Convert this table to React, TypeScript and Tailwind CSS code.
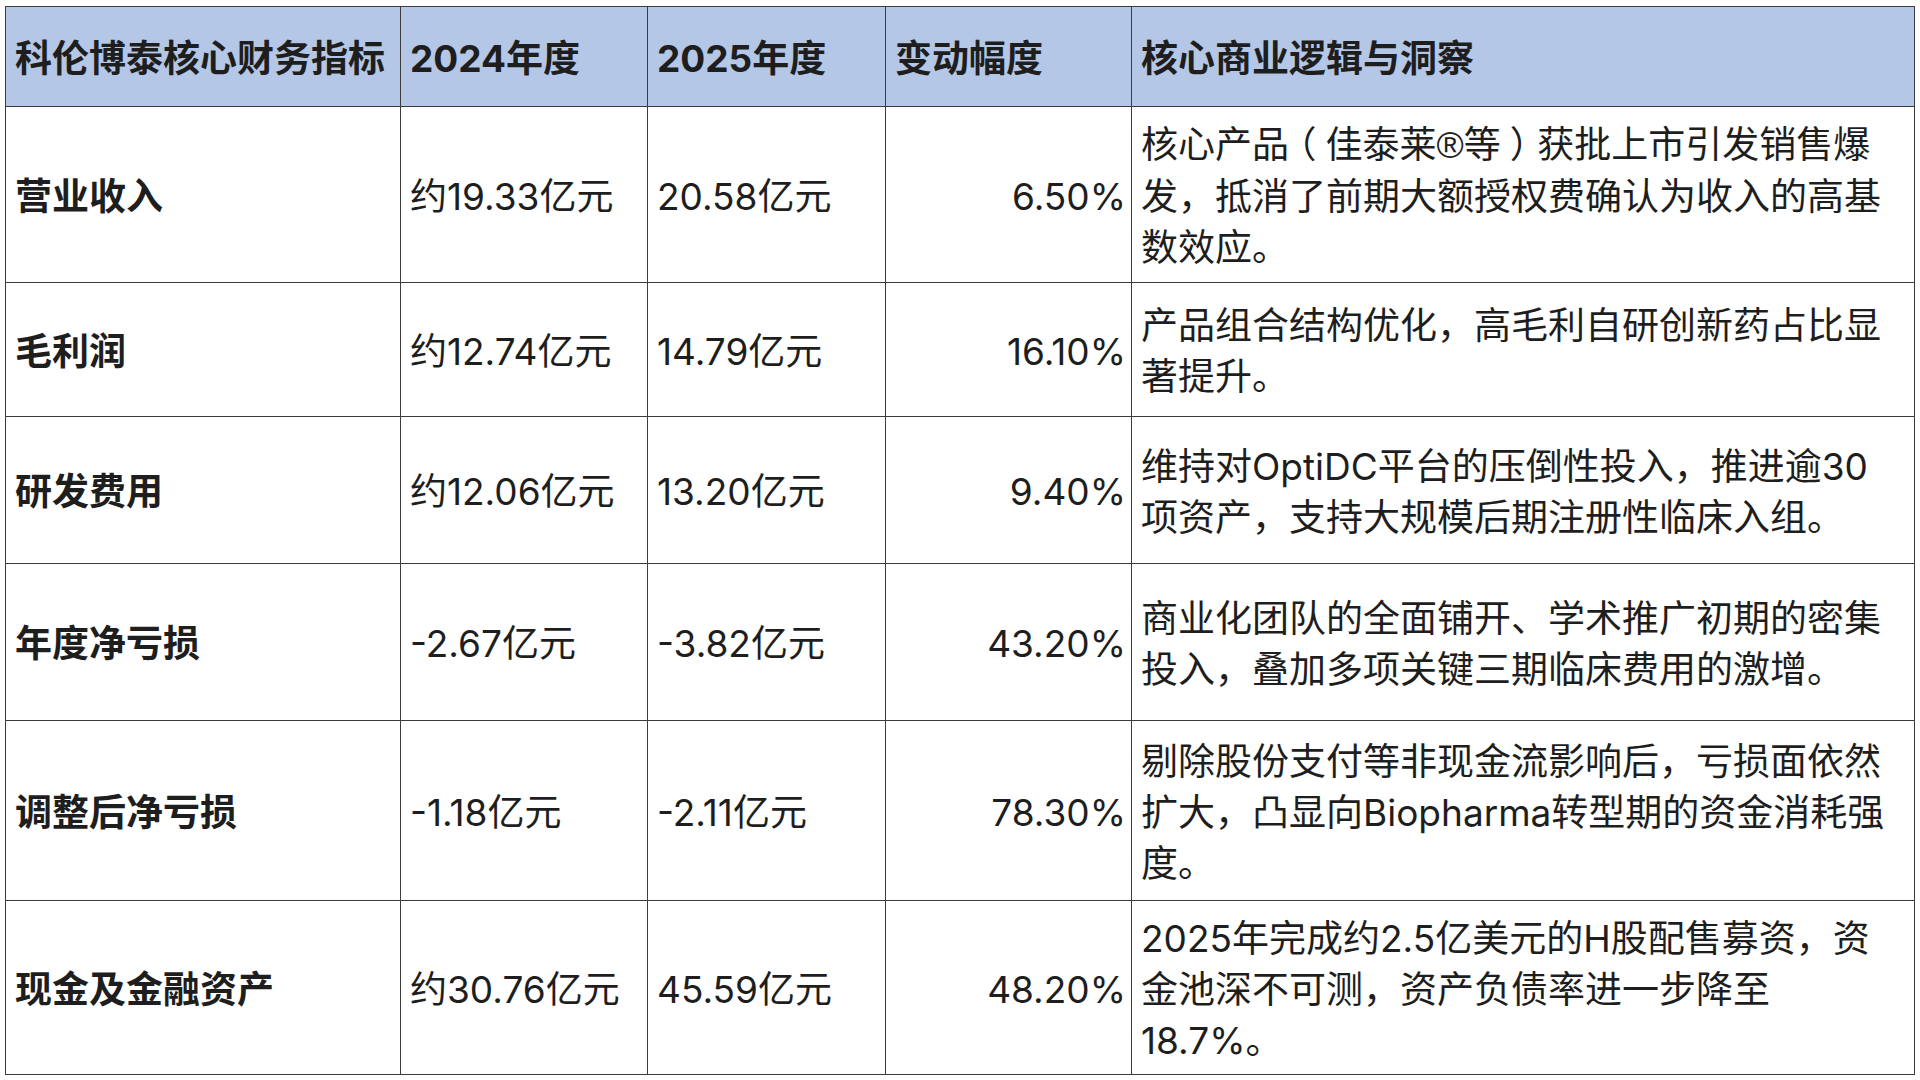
import React from "react";

const R = () => <span className="font-['Liberation_Sans']">®</span>;
const Paren = ({ c }: { c: string }) => (
  <span className="px-[9px] [font-feature-settings:'halt']">{c}</span>
);

const rows: { name: string; a: string; b: string; c: string; lines: React.ReactNode[]; h: number }[] = [
  {
    name: "营业收入",
    a: "约19.33亿元",
    b: "20.58亿元",
    c: "6.50%",
    lines: [
      <>
        核心产品<Paren c="（" />佳泰莱<R />等<Paren c="）" />获批上市引发销售爆
      </>,
      "发，抵消了前期大额授权费确认为收入的高基",
      "数效应。",
    ],
    h: 176,
  },
  {
    name: "毛利润",
    a: "约12.74亿元",
    b: "14.79亿元",
    c: "16.10%",
    lines: ["产品组合结构优化，高毛利自研创新药占比显", "著提升。"],
    h: 134,
  },
  {
    name: "研发费用",
    a: "约12.06亿元",
    b: "13.20亿元",
    c: "9.40%",
    lines: ["维持对OptiDC平台的压倒性投入，推进逾30", "项资产，支持大规模后期注册性临床入组。"],
    h: 147,
  },
  {
    name: "年度净亏损",
    a: "-2.67亿元",
    b: "-3.82亿元",
    c: "43.20%",
    lines: ["商业化团队的全面铺开、学术推广初期的密集", "投入，叠加多项关键三期临床费用的激增。"],
    h: 157,
  },
  {
    name: "调整后净亏损",
    a: "-1.18亿元",
    b: "-2.11亿元",
    c: "78.30%",
    lines: ["剔除股份支付等非现金流影响后，亏损面依然", "扩大，凸显向Biopharma转型期的资金消耗强", "度。"],
    h: 180,
  },
  {
    name: "现金及金融资产",
    a: "约30.76亿元",
    b: "45.59亿元",
    c: "48.20%",
    lines: ["2025年完成约2.5亿美元的H股配售募资，资", "金池深不可测，资产负债率进一步降至", "18.7%。"],
    h: 174,
  },
];

export default function App() {
  const cell = "border-[1.5px] border-[#3c3c3c] pl-[9px] pr-[9px] pt-[3px] pb-0 align-middle whitespace-nowrap";
  return (
    <div
      className="w-[1920px] h-[1080px] bg-white pl-[5px] pt-[6px] text-[#1e1e1e] text-[37px] leading-[51px]"
      style={{ fontFamily: 'Inter, "Noto Sans CJK SC", sans-serif' }}
    >
      <table className="border-collapse table-fixed w-[1909px]">
        <colgroup>
          <col className="w-[395px]" />
          <col className="w-[247px]" />
          <col className="w-[238px]" />
          <col className="w-[246px]" />
          <col className="w-[783px]" />
        </colgroup>
        <thead>
          <tr className="h-[100px] bg-[#b4c7e7]">
            <th className={`${cell} text-left font-bold`}>科伦博泰核心财务指标</th>
            <th className={`${cell} text-left font-bold`}>2024年度</th>
            <th className={`${cell} text-left font-bold`}>2025年度</th>
            <th className={`${cell} text-left font-bold`}>变动幅度</th>
            <th className={`${cell} text-left font-bold`}>核心商业逻辑与洞察</th>
          </tr>
        </thead>
        <tbody>
          {rows.map((r) => (
            <tr key={r.name} style={{ height: r.h }}>
              <td className={`${cell} font-bold`}>{r.name}</td>
              <td className={cell}>{r.a}</td>
              <td className={cell}>{r.b}</td>
              <td className={`${cell} text-right !pr-[5px]`}>{r.c}</td>
              <td className={cell}>
                {r.lines.map((l, i) => (
                  <div key={i}>{l}</div>
                ))}
              </td>
            </tr>
          ))}
        </tbody>
      </table>
    </div>
  );
}
